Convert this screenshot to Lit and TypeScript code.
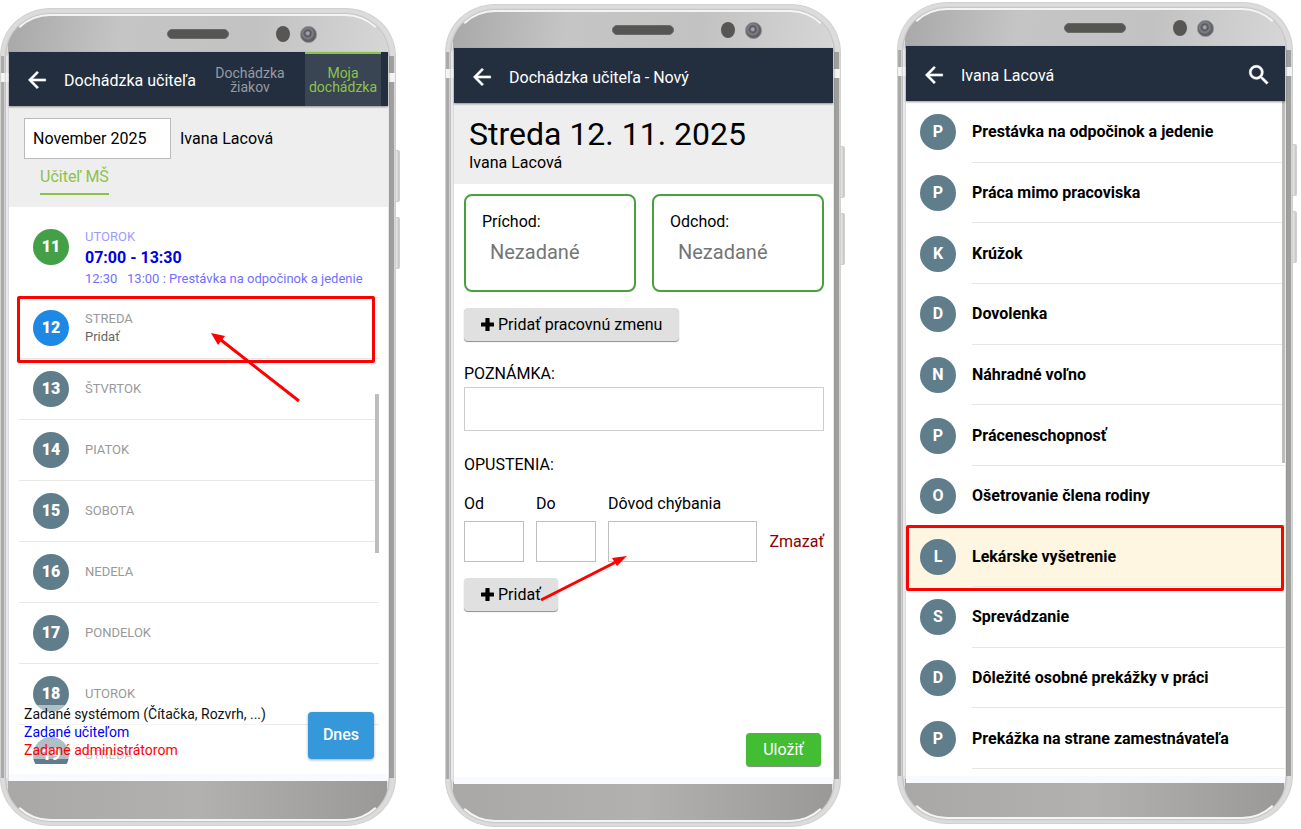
import { LitElement, html, css, svg, nothing } from "lit";
import { customElement, property } from "lit/decorators.js";
import { classMap } from "lit/directives/class-map.js";

const shared = css`
  *, *::before, *::after { box-sizing: border-box; }
  button, input, textarea { font: inherit; color: inherit; margin: 0; }
  h1, h2, p, ul { margin: 0; padding: 0; }
  ul { list-style: none; }
  a { text-decoration: none; }
  .icon-button { display: grid; place-items: center; width: 24px; height: 24px; padding: 0; border: 0; background: none; color: #fff; }
  .bar { display: flex; align-items: center; flex: none; height: 55px; padding: 0 15px; background: #232f3f; color: #fff; box-shadow: 0 1px 2px rgba(0, 0, 0, 0.4); position: relative; }
  .title { font-size: 16px; line-height: 20px; font-weight: 400; }
  .bar .title { padding-top: 4px; }
`;

const backIcon = svg`<svg width="26" height="26" viewBox="0 0 24 24" aria-hidden="true"><path d="M20 11H7.83l5.59-5.59L12 4l-8 8 8 8 1.41-1.41L7.83 13H20z" fill="currentColor" stroke="currentColor" stroke-width=".5"/></svg>`;
const searchIcon = svg`<svg width="26" height="26" viewBox="0 0 24 24" aria-hidden="true"><path d="M15.5 14h-.79l-.28-.27A6.47 6.47 0 0 0 16 9.5 6.5 6.5 0 1 0 9.5 16c1.61 0 3.09-.59 4.23-1.57l.27.28v.79l5 4.99L20.49 19l-4.99-5zm-6 0C7.01 14 5 11.99 5 9.5S7.01 5 9.5 5 14 7.01 14 9.5 11.99 14 9.5 14z" fill="currentColor" stroke="currentColor" stroke-width=".5"/></svg>`;
const plusIcon = svg`<svg width="13" height="13" viewBox="0 0 13 13" aria-hidden="true"><path d="M5 0h3q.6 0 .6.6v3.800h3.800q.6 0 .6.6v3q0 .6-.6.6H8.600v3.800q0 .6-.6.6H5q-.6 0-.6-.6V8.600H.6Q0 8.600 0 8V5q0-.6.6-.6h3.800V.6Q4.400 0 5 0z" fill="#000"/></svg>`;

@customElement("phone-frame")
class PhoneFrame extends LitElement {
  static styles = css`
    *, *::before, *::after { box-sizing: border-box; }
    :host { display: flex; position: relative; min-width: 0; }
    .body {
      flex: 1; min-width: 0; display: flex; flex-direction: column; position: relative;
      padding: 0 8px 0 9px; border-radius: 50px / 48px;
      background:
        linear-gradient(to bottom, transparent 65px, #f4f4f4 65px 74px, transparent 74px),
        linear-gradient(to right, #cfcfcf 0 1px, #a9a9a8 1px 4px, #d4d4d4 4px 6px, #e8e8ee 6px 8px, transparent 8px calc(100% - 8px), #e8e8e8 calc(100% - 8px) calc(100% - 7px), #9f9f9e calc(100% - 7px) calc(100% - 2px), #d6d6d6 calc(100% - 2px)) 0 48px / 100% calc(100% - 96px) no-repeat,
        #dcdcdc;
      box-shadow: inset 0 0 1px 1px #d0d0d0;
    }
    .body::before {
      content: ""; position: absolute; inset: 6px 7px 5px 6px; border-radius: 44px / 42px;
      border: 2px solid #f4f4f4; border-left-color: transparent; border-right-color: transparent;
      background:
        linear-gradient(to right, #a9a8a7, #b2b1b0 50%, #9a9997) bottom / 100% 38px no-repeat,
        linear-gradient(100deg, #a9a8a8, #c6c5c5 30%, #c2c2c2 65%, #d6d6d6) top / 100% 38px no-repeat;
      box-shadow: 0 0 2px 0 #8f8f8e;
    }
    .top { flex: none; height: 44px; display: flex; align-items: center; justify-content: center; padding: 8px 0 0 86px; position: relative; }
    .speaker { width: 62px; height: 10px; border-radius: 5px; background: #555554; border: 1px solid #6b6a6a; }
    .sensor { width: 14px; height: 16px; margin-left: 47px; border-radius: 50%; background: #575655; }
    .lens { width: 17px; height: 17px; margin-left: 10px; border-radius: 50%; background: radial-gradient(circle at 45% 42%, #a4a7b0 0 1px, #55565c 3px, #808187 5px, #5f5f63 7px); border: 1px solid #88888a; }
    .screen { flex: 1; min-height: 0; display: flex; flex-direction: column; position: relative; background: #fff; border-bottom: 7px solid #f8faff; }
    .chin { flex: none; height: var(--chin, 44px); }
    .key { position: absolute; left: 100%; width: 4px; height: 52px; border-radius: 0 2px 2px 0; background: linear-gradient(to right, #e9e9e9, #c4c4c4); border: 1px solid #cfcfcf; border-left: 0; }
    .volume { top: 142px; }
    .power { top: 209px; }
  `;
  render() {
    return html`
      <div class="body">
        <div class="top"><span class="speaker"></span><span class="sensor"></span><span class="lens"></span></div>
        <div class="screen"><slot></slot></div>
        <div class="chin"></div>
      </div>
      <span class="key volume"></span><span class="key power"></span>
    `;
  }
}

interface Day { n: number; name: string; tone?: string; add?: boolean; hours?: string; note?: string; }
const days: Day[] = [
  { n: 11, name: "UTOROK", tone: "green", hours: "07:00 - 13:30", note: "12:30   13:00 : Prestávka na odpočinok a jedenie" },
  { n: 12, name: "STREDA", tone: "blue", add: true },
  { n: 13, name: "ŠTVRTOK" },
  { n: 14, name: "PIATOK" },
  { n: 15, name: "SOBOTA" },
  { n: 16, name: "NEDEĽA" },
  { n: 17, name: "PONDELOK" },
  { n: 18, name: "UTOROK" },
  { n: 19, name: "STREDA" },
];

@customElement("attendance-screen")
class AttendanceScreen extends LitElement {
  static styles = [shared, css`
    :host { flex: 1; min-height: 0; display: flex; flex-direction: column; }
    .tabbed { height: 54px; padding-right: 7px; }
    .tabbed .title { flex: 1; margin-left: 16px; white-space: nowrap; }
    .tab { display: grid; place-items: center; align-self: stretch; width: 76px; padding: 0; border: 0; border-top: 2px solid transparent; background: none; color: #959ba3; font-size: 14px; line-height: 14px; font-weight: 400; text-align: center; }
    .tab + .tab { margin-left: 17px; }
    .tab.current { background: #3a4554; border-color: #8bc34a; color: #8bc34a; }
    .filter { flex: none; height: 101px; padding: 12px 15px 0; background: #eee; }
    .row { display: flex; align-items: center; gap: 9px; font-size: 16px; }
    .month { width: 147px; height: 41px; padding: 0 8px; border: 1px solid #bbb; border-radius: 0; background: #fff; }
    .role { display: inline-block; margin: 6px 0 0 16px; padding-bottom: 4px; border-bottom: 2px solid #8bc34a; color: #8bc34a; font-size: 16px; line-height: 24px; }
    .list { flex: 1; min-height: 0; position: relative; margin-bottom: 10px; }
    .days { position: absolute; inset: 0; overflow: hidden; padding: 10px 9px 0 10px; }
    .day { display: flex; gap: 16px; height: 61px; padding: 12px 14px 0; border-bottom: 1px solid #e8e8e8; position: relative; }
    .day.tall { height: 81px; }
    .badge { flex: none; display: grid; place-items: center; width: 36px; height: 36px; border-radius: 50%; background: #607d8b; color: #fff; font-size: 16px; line-height: 18px; padding-bottom: 1px; font-weight: 900; }
    .badge.green { background: #43a047; }
    .badge.blue { background: #1e88e5; }
    .text { height: 36px; display: flex; flex-direction: column; justify-content: center; color: #999; font-size: 13px; line-height: 18px; white-space: pre; }
    .tall .text { justify-content: flex-start; height: auto; margin-top: -1px; color: #9c9cff; }
    .hours { color: #0000e6; font-size: 16px; line-height: 24px; font-weight: 700; }
    .note { line-height: 18px; color: #7070ff; }
    .add { padding: 0; border: 0; background: none; color: #666; text-align: left; }
    .mark { position: absolute; inset: -2px 4px -5px -2px; border: 3px solid #f00; border-radius: 2px; z-index: 1; }
    .arrow { position: absolute; left: 186px; top: 30px; z-index: 1; }
    .thumb { position: absolute; right: 9px; top: 187px; width: 4px; height: 159px; background: #bdbdbd; }
    .footer { position: absolute; left: 15px; right: 14px; bottom: 5px; display: flex; justify-content: space-between; align-items: flex-end; z-index: 2; }
    .legend { background: rgba(255, 255, 255, 0.5); font-size: 14px; line-height: 18px; color: #111; white-space: nowrap; }
    .teacher { color: #00f; }
    .admin { color: #f00; }
    .today { width: 66px; height: 47px; padding: 0 0 2px; border: 0; border-radius: 4px; background: #3498db; color: #fff; font-size: 16px; font-weight: 500; box-shadow: 0 1px 3px rgba(0, 0, 0, 0.35); }
  `];
  render() {
    return html`
      <header class="bar tabbed">
        <button class="icon-button" aria-label="Späť">${backIcon}</button>
        <h1 class="title">Dochádzka učiteľa</h1>
        <button class="tab">Dochádzka<br>žiakov</button>
        <button class="tab current">Moja<br>dochádzka</button>
      </header>
      <div class="filter">
        <div class="row"><input class="month" aria-label="Mesiac" .value=${"November 2025"}><span>Ivana Lacová</span></div>
        <a class="role" href="#ucitel">Učiteľ MŠ</a>
      </div>
      <div class="list">
        <ul class="days">
          ${days.map((d) => html`
            <li class=${classMap({ day: true, tall: !!d.hours })}>
              <span class=${classMap({ badge: true, green: d.tone === "green", blue: d.tone === "blue" })}>${d.n}</span>
              <div class="text"><span>${d.name}</span>${d.hours ? html`<span class="hours">${d.hours}</span><span class="note">${d.note}</span>` : nothing}${d.add ? html`<button class="add">Pridať</button>` : nothing}</div>
              ${d.add ? html`<span class="mark"></span>
                <svg class="arrow" width="100" height="80" viewBox="0 0 100 80" aria-hidden="true"><path d="M94 73 16 12" stroke="#f00" stroke-width="3"/><path d="M6 5l14 3-7 9z" fill="#f00"/></svg>` : nothing}
            </li>`)}
        </ul>
        <span class="thumb"></span>
        <div class="footer">
          <div class="legend"><p>Zadané systémom (Čítačka, Rozvrh, ...)</p><p class="teacher">Zadané učiteľom</p><p class="admin">Zadané administrátorom</p></div>
          <button class="today">Dnes</button>
        </div>
      </div>
    `;
  }
}

@customElement("entry-screen")
class EntryScreen extends LitElement {
  static styles = [shared, css`
    :host { flex: 1; min-height: 0; display: flex; flex-direction: column; }
    .bar .title { margin-left: 16px; }
    .head { flex: none; height: 81px; padding: 12px 15px 0; background: #eee; font-size: 16px; line-height: 20px; }
    .date { font-size: 32px; line-height: 38px; font-weight: 400; }
    .form { flex: 1; min-height: 0; display: flex; flex-direction: column; align-items: flex-start; padding: 10px 9px 11px 10px; font-size: 16px; line-height: 20px; }
    .times { align-self: stretch; display: grid; grid-template-columns: 1fr 1fr; gap: 16px; }
    .time { display: flex; flex-direction: column; height: 98px; padding: 16px; border: 2px solid #4a9f40; border-radius: 8px; }
    .time input { width: 100%; height: 36px; margin-top: 2px; padding: 0 8px; border: 0; background: none; font-size: 20px; }
    .time input::placeholder { color: #757575; opacity: 1; }
    .soft { display: flex; align-items: center; gap: 4px; height: 33px; padding: 0 17px; border: 0; border-radius: 4px; background: #e0e0e0; box-shadow: 0 1px 1px rgba(0, 0, 0, 0.45); }
    .shift { margin-top: 16px; }
    .label { margin-top: 23px; }
    .memo { align-self: stretch; display: block; height: 44px; margin-top: 3px; border: 1px solid #ccc; border-radius: 0; background: #fff; resize: none; }
    .section { margin-top: 24px; }
    .absence { align-self: stretch; display: grid; grid-template-columns: 60px 60px 1fr auto; gap: 7px 12px; align-items: center; margin: 19px 0 16px; }
    .absence input { width: 100%; height: 41px; border: 1px solid #bfbfbf; border-radius: 0; background: #fff; }
    .reason { position: relative; }
    .reason input { display: block; }
    .remove { grid-column: 4; color: #8b0000; }
    .arrow { position: absolute; left: -74px; top: 29px; }
    .save { align-self: flex-end; margin: auto 3px 0 0; width: 75px; height: 33px; padding: 0; border: 0; border-radius: 4px; background: #43bd32; color: #fff; box-shadow: 0 1px 1px rgba(0, 0, 0, 0.5); }
  `];
  render() {
    return html`
      <header class="bar"><button class="icon-button" aria-label="Späť">${backIcon}</button><h1 class="title">Dochádzka učiteľa - Nový</h1></header>
      <div class="head"><h2 class="date">Streda 12. 11. 2025</h2><p>Ivana Lacová</p></div>
      <div class="form">
        <div class="times">
          <div class="time"><label for="in">Príchod:</label><input id="in" placeholder="Nezadané"></div>
          <div class="time"><label for="out">Odchod:</label><input id="out" placeholder="Nezadané"></div>
        </div>
        <button class="soft shift">${plusIcon}Pridať pracovnú zmenu</button>
        <label class="label" for="memo">POZNÁMKA:</label>
        <textarea class="memo" id="memo"></textarea>
        <h2 class="section title">OPUSTENIA:</h2>
        <div class="absence">
          <label for="from">Od</label><label for="to">Do</label><label for="reason">Dôvod chýbania</label><span></span>
          <input id="from"><input id="to">
          <div class="reason"><input id="reason">
            <svg class="arrow" width="100" height="56" viewBox="0 0 100 56" aria-hidden="true"><path d="M7 50 82 12" stroke="#f00" stroke-width="3"/><path d="M93 6 78 8l5 8z" fill="#f00"/></svg>
          </div>
          <a class="remove" href="#zmazat">Zmazať</a>
        </div>
        <button class="soft">${plusIcon}Pridať</button>
        <button class="save">Uložiť</button>
      </div>
    `;
  }
}

const reasons = [
  "Prestávka na odpočinok a jedenie", "Práca mimo pracoviska", "Krúžok", "Dovolenka", "Náhradné voľno",
  "Práceneschopnosť", "Ošetrovanie člena rodiny", "Lekárske vyšetrenie", "Sprevádzanie",
  "Dôležité osobné prekážky v práci", "Prekážka na strane zamestnávateľa",
];

@customElement("reason-screen")
class ReasonScreen extends LitElement {
  @property() selected = "Lekárske vyšetrenie";
  static styles = [shared, css`
    :host { flex: 1; min-height: 0; display: flex; flex-direction: column; position: relative; }
    .bar { z-index: 1; }
    .bar .title { flex: 1; margin-left: 16px; }
    .list { flex: 1; min-height: 0; display: flex; flex-direction: column; padding: 1px 0 7px; position: relative; }
    .item { flex: 1; min-height: 40px; display: flex; position: relative; padding-left: 14px; }
    .item.selected { background: #fef6e0; }
    .badge { align-self: center; flex: none; display: grid; place-items: center; width: 36px; height: 36px; border-radius: 50%; background: #607d8b; color: #fff; font-size: 16px; line-height: 18px; font-weight: 700; }
    .name { flex: 1; display: flex; align-items: center; margin-left: 16px; border-bottom: 1px solid #e6e6e6; font-size: 16px; font-weight: 700; }
    .mark { position: absolute; inset: -1px 1px -4px 0; border: 3px solid #f00; border-radius: 2px; z-index: 1; }
    .thumb { position: absolute; right: 0; top: 0; width: 3px; height: 362px; background: #bdbdbd; }
  `];
  render() {
    return html`
      <header class="bar"><button class="icon-button" aria-label="Späť">${backIcon}</button><h1 class="title">Ivana Lacová</h1><button class="icon-button" aria-label="Hľadať">${searchIcon}</button></header>
      <ul class="list">
        ${reasons.map((r) => html`
          <li class=${classMap({ item: true, selected: r === this.selected })}>
            <span class="badge">${r[0]}</span><span class="name">${r}</span>
            ${r === this.selected ? html`<span class="mark"></span>` : nothing}
          </li>`)}
        <span class="thumb"></span>
      </ul>
    `;
  }
}

@customElement("app-root")
class AppRoot extends LitElement {
  static styles = css`
    :host { display: block; font-family: Roboto, "Noto Sans", sans-serif; color: #000; background: #fff; }
    .stage { display: flex; height: 100vh; min-height: 760px; padding-right: 8px; }
    phone-frame { flex: 1; }
    .first { margin: 8px 0 3px; --chin: 45px; }
    .second { margin: 4px 0 2px 49px; --chin: 43px; }
    .third { margin: 2px 0 5px 56px; --chin: 41px; }
  `;
  render() {
    return html`
      <main class="stage">
        <phone-frame class="first"><attendance-screen></attendance-screen></phone-frame>
        <phone-frame class="second"><entry-screen></entry-screen></phone-frame>
        <phone-frame class="third"><reason-screen></reason-screen></phone-frame>
      </main>
    `;
  }
}
